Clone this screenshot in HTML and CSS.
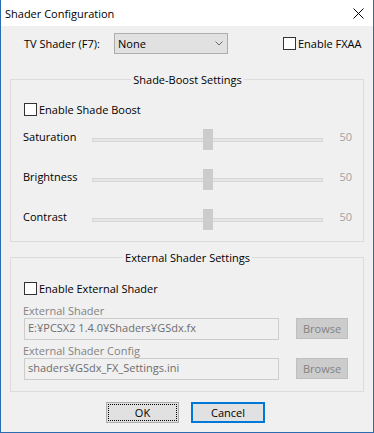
FILE: index.html
```html
<!DOCTYPE html>
<html lang="en">
<head>
    <meta charset="UTF-8">
    <meta name="viewport" content="width=device-width, initial-scale=1.0">
    <title>Shader Configuration</title>
    <link rel="stylesheet" href="styles.css">
</head>
<body>
    <div class="window">
        <div class="titlebar">
            <span class="title">Shader Configuration</span>
            <svg class="close" width="11" height="11" viewBox="0 0 11 11">
                <path d="M0.5 0.5L10.5 10.5M10.5 0.5L0.5 10.5" stroke="#000" stroke-width="1" fill="none"/>
            </svg>
        </div>

        <div class="top-row">
            <span class="tv-label">TV Shader (F7):</span>
            <div class="select">
                <span>None</span>
                <svg width="8" height="5" viewBox="0 0 8 5">
                    <path d="M0.5 0.5L4 4L7.5 0.5" stroke="#6a6a6a" stroke-width="1" fill="none"/>
                </svg>
            </div>
            <label class="check fxaa"><span class="box"></span>Enable FXAA</label>
        </div>

        <fieldset class="group boost">
            <legend>Shade-Boost Settings</legend>
            <label class="check"><span class="box"></span>Enable Shade Boost</label>

            <div class="slider-row first">
                <span class="slider-label">Saturation</span>
                <div class="slider"><div class="track"><span class="thumb"></span></div></div>
                <span class="value">50</span>
            </div>
            <div class="slider-row">
                <span class="slider-label">Brightness</span>
                <div class="slider"><div class="track"><span class="thumb"></span></div></div>
                <span class="value">50</span>
            </div>
            <div class="slider-row">
                <span class="slider-label">Contrast</span>
                <div class="slider"><div class="track"><span class="thumb"></span></div></div>
                <span class="value">50</span>
            </div>
        </fieldset>

        <fieldset class="group external">
            <legend>External Shader Settings</legend>
            <label class="check"><span class="box"></span>Enable External Shader</label>

            <div class="field-label first">External Shader</div>
            <div class="file-row">
                <div class="textbox">E:¥PCSX2 1.4.0¥Shaders¥GSdx.fx</div>
                <div class="browse">Browse</div>
            </div>

            <div class="field-label">External Shader Config</div>
            <div class="file-row">
                <div class="textbox">shaders¥GSdx_FX_Settings.ini</div>
                <div class="browse">Browse</div>
            </div>
        </fieldset>

        <div class="buttons">
            <div class="button button-ok"><span class="focus">OK</span></div>
            <div class="button button-cancel">Cancel</div>
        </div>
    </div>
</body>
</html>
```

FILE: styles.css
```css
body {
    margin: 0;
    font-family: "Open Sans", "Noto Sans", sans-serif;
    font-size: 11px;
    line-height: 15px;
    color: #000;
}

.window {
    width: 374px;
    height: 433px;
    box-sizing: border-box;
    border: 1px solid #2b6cb0;
    border-top: none;
    background-color: #f0f0f0;
    display: flex;
    flex-direction: column;
}

.titlebar {
    height: 26px;
    flex-shrink: 0;
    background-color: #fff;
    display: flex;
    align-items: center;
    justify-content: space-between;
    padding: 0 9px 0 4px;
}

.close {
    display: block;
}

.top-row {
    display: flex;
    align-items: center;
    height: 21px;
    margin-top: 7px;
    padding-left: 23px;
}

.tv-label {
    width: 90px;
}

.select {
    width: 114px;
    height: 21px;
    box-sizing: border-box;
    border: 1px solid #adadad;
    background-color: #e1e1e1;
    display: flex;
    align-items: center;
    justify-content: space-between;
    padding: 0 4px 0 3px;
}

.select svg {
    display: block;
}

.check {
    display: flex;
    align-items: center;
    height: 15px;
}

.box {
    width: 13px;
    height: 13px;
    box-sizing: border-box;
    border: 1px solid #333;
    background-color: #fff;
    margin-right: 2px;
}

.fxaa {
    margin-left: 55px;
}

.group {
    margin: 0 9px;
    border: 1px solid #dcdcdc;
    min-inline-size: 0;
}

.group legend {
    margin: 0 auto;
    padding: 0 2px;
    line-height: 15px;
}

.group .check {
    padding-left: 1px;
}

.boost {
    margin-top: 18px;
    padding: 15px 11px 11px 12px;
}

.external {
    margin-top: 8px;
    padding: 16px 11px 11px 12px;
}

.slider-row {
    display: flex;
    align-items: flex-start;
    height: 21px;
    margin-top: 19px;
}

.slider-row.first {
    margin-top: 12px;
}

.slider-label {
    width: 69px;
}

.slider {
    width: 233px;
    height: 21px;
    display: flex;
    align-items: center;
}

.track {
    width: 100%;
    height: 4px;
    box-sizing: border-box;
    border: 1px solid #d6d6d6;
    background-color: #e7e7e7;
    display: flex;
    align-items: center;
    justify-content: center;
}

.thumb {
    width: 10px;
    height: 21px;
    flex-shrink: 0;
    background-color: #cccccc;
}

.value {
    margin-left: 16px;
    color: #a0a0a0;
}

.field-label {
    color: #838383;
    margin-top: 3px;
}

.field-label.first {
    margin-top: 7px;
}

.file-row {
    display: flex;
    align-items: flex-start;
}

.textbox {
    width: 255px;
    height: 22px;
    box-sizing: border-box;
    margin-left: 1px;
    padding: 1px 3px 0;
    border: 1px solid #cccccc;
    background-color: #f0f0f0;
    color: #6d6d6d;
    white-space: nowrap;
}

.browse {
    width: 52px;
    height: 21px;
    box-sizing: border-box;
    margin-left: 17px;
    border: 1px solid #bfbfbf;
    background-color: #cccccc;
    color: #838383;
    display: flex;
    align-items: center;
    justify-content: center;
}

.buttons {
    display: flex;
    justify-content: center;
    gap: 12px;
    margin-top: 10px;
    padding-right: 3px;
}

.button {
    height: 21px;
    box-sizing: border-box;
    background-color: #e1e1e1;
    display: flex;
    align-items: center;
    justify-content: center;
}

.button-ok {
    width: 73px;
    border: 1px solid #adadad;
    padding: 1px;
}

.focus {
    flex: 1;
    align-self: stretch;
    border: 1px dotted #000;
    display: flex;
    align-items: center;
    justify-content: center;
}

.button-cancel {
    width: 74px;
    border: 2px solid #0078d7;
}
```
